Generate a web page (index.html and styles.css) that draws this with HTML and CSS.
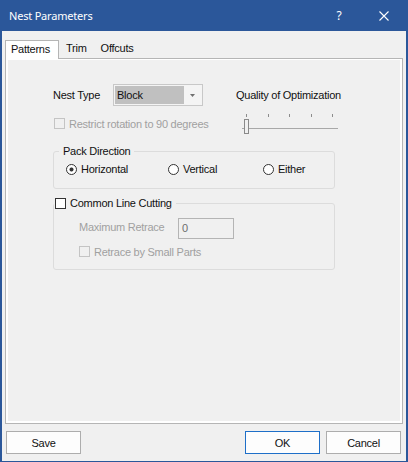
FILE: index.html
```html
<!DOCTYPE html>
<html>
<head>
<meta charset="utf-8">
<title>Nest Parameters</title>
<link rel="stylesheet" href="styles.css">
</head>
<body>
<div class="window">
  <div class="titlebar">
    <span class="title">Nest Parameters</span>
    <span class="cap help">?</span>
    <span class="cap close"><svg width="10" height="10" viewBox="0 0 10 10"><path d="M0.5 0.5L9.5 9.5M9.5 0.5L0.5 9.5" stroke="#fff" stroke-width="1.1" fill="none"/></svg></span>
  </div>
  <div class="client">
    <div class="tabs">
      <div class="tab active">Patterns</div>
      <div class="tab">Trim</div>
      <div class="tab">Offcuts</div>
    </div>
    <div class="panel">
      <div class="page">
        <div class="toprow">
          <div class="leftcol">
            <div class="nestrow">
              <span class="lbl">Nest Type</span>
              <div class="combo">
                <span class="combo-sel">Block</span>
                <svg class="combo-arrow" width="5" height="3" viewBox="0 0 5 3"><polygon points="0,0 5,0 2.5,3" fill="#707070"/></svg>
              </div>
            </div>
            <div class="check disabled restrict"><span class="box"></span><span>Restrict rotation to 90 degrees</span></div>
          </div>
          <div class="rightcol">
            <div class="qlabel">Quality of Optimization</div>
            <svg class="slider" width="100" height="24" viewBox="0 0 100 24">
              <g stroke="#8c8c8c" stroke-width="1">
                <line x1="6.5" y1="3" x2="6.5" y2="6"/>
                <line x1="28.5" y1="3" x2="28.5" y2="6"/>
                <line x1="49.5" y1="3" x2="49.5" y2="6"/>
                <line x1="71.5" y1="3" x2="71.5" y2="6"/>
                <line x1="92.5" y1="3" x2="92.5" y2="6"/>
              </g>
              <line x1="2" y1="17.5" x2="98" y2="17.5" stroke="#a8a8a8" stroke-width="1"/>
              <rect x="4.5" y="8.5" width="4" height="14" fill="#f0f0f0" stroke="#8a8a8a" stroke-width="1"/>
            </svg>
          </div>
        </div>
        <fieldset class="group pack">
          <legend>Pack Direction</legend>
          <div class="radios">
            <span class="radio r1"><span class="dot checked"></span>Horizontal</span>
            <span class="radio r2"><span class="dot"></span>Vertical</span>
            <span class="radio"><span class="dot"></span>Either</span>
          </div>
        </fieldset>
        <fieldset class="group common">
          <legend><span class="check legend-check"><span class="box"></span>Common Line Cutting</span></legend>
          <div class="retrace-row">
            <span class="lbl2">Maximum Retrace</span>
            <div class="textbox">0</div>
          </div>
          <div class="check disabled smallparts"><span class="box"></span><span>Retrace by Small Parts</span></div>
        </fieldset>
      </div>
    </div>
    <div class="footer">
      <button class="btn">Save</button>
      <div class="spacer"></div>
      <button class="btn default">OK</button>
      <button class="btn">Cancel</button>
    </div>
  </div>
</div>
</body>
</html>
```
FILE: styles.css
```css
html, body {
  margin: 0;
  padding: 0;
}
body {
  width: 408px;
  height: 462px;
  overflow: hidden;
  font-family: "Liberation Sans", Arial, sans-serif;
  font-size: 11px;
  letter-spacing: -0.25px;
  color: #111;
  background: #f0f0f0;
}
.window {
  width: 408px;
  height: 462px;
  box-sizing: border-box;
  border-style: solid;
  border-color: #2b579a;
  border-width: 0 2px 1px 2px;
  display: flex;
  flex-direction: column;
  background: #f0f0f0;
}
.titlebar {
  height: 31px;
  flex: none;
  background: #2b579a;
  display: flex;
  align-items: center;
  color: #fff;
}
.title {
  flex: 1;
  padding-left: 7px;
  font-family: "Noto Sans", sans-serif;
  font-size: 11px;
  letter-spacing: -0.2px;
  line-height: 31px;
}
.cap {
  height: 31px;
  display: flex;
  align-items: center;
  justify-content: center;
}
.help {
  width: 46px;
  font-family: "Noto Sans", sans-serif;
  font-size: 12px;
  letter-spacing: 0;
}
.close {
  width: 44px;
}
.close svg {
  display: block;
}
.client {
  flex: 1;
  display: flex;
  flex-direction: column;
  padding-top: 9px;
  min-height: 0;
}
.tabs {
  height: 18px;
  flex: none;
  display: flex;
  align-items: flex-end;
  padding-left: 3px;
}
.tab {
  height: 18px;
  line-height: 17px;
  padding: 0 7px;
  box-sizing: border-box;
}
.tab.active {
  width: 54px;
  height: 19px;
  padding: 0 0 0 5px;
  border: 1px solid #b5b5b5;
  border-bottom: none;
  background: #fff;
  margin-bottom: -1px;
  position: relative;
  z-index: 1;
}
.panel {
  flex: 1;
  margin: 0 3px;
  border: 1px solid #b5b5b5;
  background: #fff;
  padding: 1px 2px 2px 2px;
  display: flex;
  flex-direction: column;
  min-height: 0;
}
.page {
  flex: 1;
  background: #f0f0f0;
  padding: 24px 0 0 45px;
}
.toprow {
  display: flex;
  align-items: flex-start;
}
.leftcol {
  width: 150px;
}
.nestrow {
  display: flex;
  align-items: center;
  height: 22px;
}
.lbl {
  width: 60px;
}
.combo {
  width: 90px;
  height: 22px;
  box-sizing: border-box;
  border: 1px solid #c8c8c8;
  background: #f4f4f4;
  padding: 1px;
  display: flex;
  align-items: center;
}
.combo-sel {
  width: 69px;
  height: 18px;
  line-height: 18px;
  padding-left: 2px;
  box-sizing: border-box;
  background: #c0c0c0;
}
.combo-arrow {
  display: block;
  margin-left: 6px;
}
.check {
  display: flex;
  align-items: center;
  white-space: nowrap;
}
.box {
  width: 11px;
  height: 11px;
  box-sizing: border-box;
  border: 1px solid #333;
  background: #fff;
  margin-right: 4px;
  flex: none;
}
.check.disabled {
  color: #a0a0a0;
}
.check.disabled .box {
  border-color: #c4c4c4;
  background: transparent;
}
.restrict {
  margin-top: 12px;
  height: 11px;
  padding-left: 1px;
}
.rightcol {
  margin-left: 33px;
}
.qlabel {
  height: 22px;
  line-height: 22px;
  white-space: nowrap;
}
.slider {
  display: block;
  margin: 5px 0 0 4px;
}
.group {
  width: 282px;
  box-sizing: border-box;
  margin: 0;
  padding: 0;
  border: 1px solid #dcdcdc;
  border-radius: 3px;
  min-width: 0;
}
.group legend {
  line-height: 14px;
  padding: 0 4px;
  margin-left: 5px;
}
.pack {
  margin-top: 9px;
}
.radios {
  display: flex;
  padding: 4px 0 12px 12px;
}
.radio {
  display: flex;
  align-items: center;
  line-height: 14px;
}
.r1 {
  width: 102px;
}
.r2 {
  width: 95px;
}
.dot {
  width: 11px;
  height: 11px;
  box-sizing: border-box;
  border: 1px solid #333;
  border-radius: 50%;
  background: #fff;
  margin-right: 4px;
  flex: none;
}
.dot.checked {
  background: radial-gradient(circle, #333 0, #333 1.6px, #fff 2.4px);
}
.common {
  margin-top: 7px;
}
.common legend {
  padding: 0 4px 0 1px;
  margin-left: 0;
}
.legend-check {
  display: inline-flex;
  line-height: 14px;
}
.retrace-row {
  display: flex;
  align-items: flex-start;
  padding-left: 25px;
  margin-top: 6px;
}
.lbl2 {
  width: 99px;
  margin-top: 2px;
  line-height: 14px;
  color: #a0a0a0;
}
.textbox {
  width: 56px;
  height: 21px;
  box-sizing: border-box;
  border: 1px solid #b4b4b4;
  background: #f0f0f0;
  padding-left: 3px;
  line-height: 19px;
  color: #6d6d6d;
}
.smallparts {
  height: 14px;
  margin: 6px 0 10px 25px;
}
.footer {
  flex: none;
  display: flex;
  padding: 7px 5px 7px 4px;
}
.spacer {
  flex: 1;
}
.btn {
  width: 75px;
  height: 23px;
  box-sizing: border-box;
  border: 1px solid #adadad;
  background: #fdfdfd;
  font-family: "Liberation Sans", Arial, sans-serif;
  font-size: 11px;
  letter-spacing: -0.25px;
  color: #111;
  padding: 0;
  margin: 0;
}
.btn.default {
  border-color: #1e6fc8;
  margin-right: 6px;
}
```
